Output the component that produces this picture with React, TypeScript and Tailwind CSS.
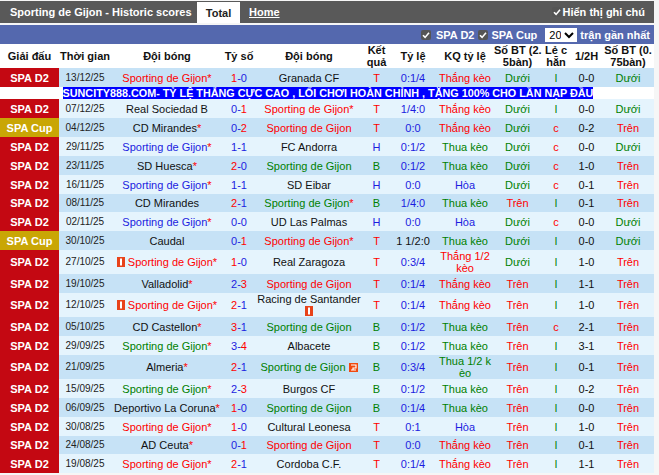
import { Fragment } from "react";

const RED = "text-[#ff0000]";
const GREEN = "text-[#008000]";
const BLUE = "text-[#1c1ce0]";
const BLACK = "text-[#111111]";

type Side = "red" | "green" | "blue" | "black";

type Match = {
  cup?: boolean;
  date: string;
  home: string;
  homeColor: Side;
  homeCard?: boolean;
  score: [number, number];
  away: string;
  awayColor: Side;
  awayCard?: "below" | "swap";
  result: "T" | "H" | "B";
  odds: string;
  oddsBlack?: boolean;
  kq: string;
  bt: "Dưới" | "Trên";
  lec: "l" | "c";
  half: string;
  bt2: "Dưới" | "Trên";
  height?: "tall" | "short";
};

const GIJON = "Sporting de Gijon";
const GIJON_STAR = "Sporting de Gijon*";

const matches: Match[] = [
  { date: "13/12/25", home: GIJON_STAR, homeColor: "red", score: [1, 0], away: "Granada CF", awayColor: "black", result: "T", odds: "0:1/4", kq: "Thắng kèo", bt: "Dưới", lec: "l", half: "0-0", bt2: "Dưới" },
  { date: "07/12/25", home: "Real Sociedad B", homeColor: "black", score: [0, 1], away: GIJON_STAR, awayColor: "red", result: "T", odds: "1/4:0", kq: "Thắng kèo", bt: "Dưới", lec: "l", half: "0-0", bt2: "Dưới" },
  { cup: true, date: "04/12/25", home: "CD Mirandes*", homeColor: "black", score: [0, 2], away: GIJON, awayColor: "red", result: "T", odds: "0:0", kq: "Thắng kèo", bt: "Dưới", lec: "c", half: "0-2", bt2: "Trên" },
  { date: "29/11/25", home: GIJON_STAR, homeColor: "blue", score: [1, 1], away: "FC Andorra", awayColor: "black", result: "H", odds: "0:1/2", kq: "Thua kèo", bt: "Dưới", lec: "c", half: "0-0", bt2: "Dưới" },
  { date: "23/11/25", home: "SD Huesca*", homeColor: "black", score: [2, 0], away: GIJON, awayColor: "green", result: "B", odds: "0:1/2", kq: "Thua kèo", bt: "Dưới", lec: "c", half: "1-0", bt2: "Trên" },
  { date: "16/11/25", home: GIJON_STAR, homeColor: "blue", score: [1, 1], away: "SD Eibar", awayColor: "black", result: "H", odds: "0:0", kq: "Hòa", bt: "Dưới", lec: "c", half: "0-1", bt2: "Trên" },
  { date: "08/11/25", home: "CD Mirandes", homeColor: "black", score: [2, 1], away: GIJON_STAR, awayColor: "green", result: "B", odds: "1/4:0", kq: "Thua kèo", bt: "Trên", lec: "l", half: "0-1", bt2: "Trên", height: "short" },
  { date: "02/11/25", home: GIJON_STAR, homeColor: "blue", score: [0, 0], away: "UD Las Palmas", awayColor: "black", result: "H", odds: "0:0", kq: "Hòa", bt: "Dưới", lec: "c", half: "0-0", bt2: "Dưới" },
  { cup: true, date: "30/10/25", home: "Caudal", homeColor: "black", score: [0, 1], away: GIJON_STAR, awayColor: "red", result: "T", odds: "1 1/2:0", oddsBlack: true, kq: "Thua kèo", bt: "Dưới", lec: "l", half: "0-0", bt2: "Dưới" },
  { date: "27/10/25", home: GIJON_STAR, homeColor: "red", homeCard: true, score: [1, 0], away: "Real Zaragoza", awayColor: "black", result: "T", odds: "0:3/4", kq: "Thắng 1/2 kèo", bt: "Dưới", lec: "l", half: "1-0", bt2: "Trên", height: "tall" },
  { date: "19/10/25", home: "Valladolid*", homeColor: "black", score: [2, 3], away: GIJON, awayColor: "red", result: "T", odds: "0:1/4", kq: "Thắng kèo", bt: "Trên", lec: "l", half: "1-1", bt2: "Trên" },
  { date: "12/10/25", home: GIJON_STAR, homeColor: "red", homeCard: true, score: [2, 1], away: "Racing de Santander", awayColor: "black", awayCard: "below", result: "T", odds: "0:1/4", kq: "Thắng kèo", bt: "Trên", lec: "l", half: "1-0", bt2: "Trên", height: "tall" },
  { date: "05/10/25", home: "CD Castellon*", homeColor: "black", score: [3, 1], away: GIJON, awayColor: "green", result: "B", odds: "0:1/2", kq: "Thua kèo", bt: "Trên", lec: "c", half: "2-1", bt2: "Trên" },
  { date: "29/09/25", home: GIJON_STAR, homeColor: "green", score: [3, 4], away: "Albacete", awayColor: "black", result: "B", odds: "0:1/2", kq: "Thua kèo", bt: "Trên", lec: "l", half: "3-1", bt2: "Trên" },
  { date: "21/09/25", home: "Almeria*", homeColor: "black", score: [2, 1], away: GIJON, awayColor: "green", awayCard: "swap", result: "B", odds: "0:3/4", kq: "Thua 1/2 kèo", bt: "Trên", lec: "l", half: "0-1", bt2: "Trên", height: "tall" },
  { date: "15/09/25", home: GIJON_STAR, homeColor: "green", score: [2, 3], away: "Burgos CF", awayColor: "black", result: "B", odds: "0:1/2", kq: "Thua kèo", bt: "Trên", lec: "l", half: "0-2", bt2: "Trên" },
  { date: "06/09/25", home: "Deportivo La Coruna*", homeColor: "black", score: [1, 0], away: GIJON, awayColor: "green", result: "B", odds: "0:1/4", kq: "Thua kèo", bt: "Trên", lec: "l", half: "0-0", bt2: "Trên" },
  { date: "30/08/25", home: GIJON_STAR, homeColor: "red", score: [1, 0], away: "Cultural Leonesa", awayColor: "black", result: "T", odds: "0:1", kq: "Hòa", bt: "Trên", lec: "l", half: "1-0", bt2: "Trên" },
  { date: "24/08/25", home: "AD Ceuta*", homeColor: "black", score: [0, 1], away: GIJON, awayColor: "red", result: "T", odds: "0:0", kq: "Thắng kèo", bt: "Trên", lec: "l", half: "0-1", bt2: "Trên", height: "short" },
  { date: "19/08/25", home: GIJON_STAR, homeColor: "red", score: [2, 1], away: "Cordoba C.F.", awayColor: "black", result: "T", odds: "0:1/4", kq: "Thắng kèo", bt: "Trên", lec: "l", half: "1-1", bt2: "Trên" },
];

const sideClass: Record<Side, string> = {
  red: RED,
  green: GREEN,
  blue: BLUE,
  black: BLACK,
};

const resultClass = { T: RED, H: BLUE, B: GREEN };

const heightClass = { tall: "h-[24px]", short: "h-[18px]" };

const kqClass = (kq: string) => {
  if (kq.startsWith("Thắng")) return RED;
  if (kq.startsWith("Thua")) return GREEN;
  return BLUE;
};

const RedCard = ({ className = "" }: { className?: string }) => (
  <svg viewBox="0 0 8 10" className={`inline-block h-[10px] w-[8px] align-[-1px] ${className}`}>
    <rect width="8" height="10" fill="#e8431a" />
    <rect x="3" y="1.5" width="2" height="7" fill="#ffffff" />
  </svg>
);

const SwapCard = () => (
  <svg viewBox="0 0 9 9" className="ml-[3px] inline-block h-[9px] w-[9px] align-[-1px]">
    <rect width="9" height="9" fill="#f04a10" />
    <path d="M2 2h5v3H4v2" fill="none" stroke="#ffffff" strokeWidth="1.2" />
    <path d="M2 7h5" stroke="#ffffff" strokeWidth="1" />
  </svg>
);

const Checkbox = () => (
  <span className="flex h-[10px] w-[10px] shrink-0 items-center justify-center rounded-[2px] bg-[#555555]">
    <svg viewBox="0 0 10 10" className="h-[10px] w-[10px]">
      <path d="M2 5.2 4.1 7.4 8 2.8" fill="none" stroke="#ffffff" strokeWidth="1.6" />
    </svg>
  </span>
);

const Score = ({ score }: { score: [number, number] }) => {
  const [a, b] = score;
  return (
    <>
      <span className={a > b ? RED : BLUE}>{a}</span>
      <span className={BLUE}>-</span>
      <span className={b > a ? RED : BLUE}>{b}</span>
    </>
  );
};

// the star is always red, whatever colour the team name has
const Team = ({ name }: { name: string }) =>
  name.endsWith("*") ? (
    <>
      {name.slice(0, -1)}
      <span className={RED}>*</span>
    </>
  ) : (
    <>{name}</>
  );

const headers = [
  "Giải đấu",
  "Thời gian",
  "Đội bóng",
  "Tỷ số",
  "Đội bóng",
  "Kết\nquả",
  "Tỷ lệ",
  "KQ tỷ lệ",
  "Số BT (2.\n5bàn)",
  "Lẻ c\nhẵn",
  "1/2H",
  "Số BT (0.\n75bàn)",
];

const Row = ({ m, index }: { m: Match; index: number }) => (
  <tr className={`${index % 2 === 0 ? "bg-[#c6e2f6]" : "bg-[#e5f4fd]"} ${m.height ? heightClass[m.height] : "h-[19px]"}`}>
    <td className={`font-bold text-white ${m.cup ? "bg-[#c9a605]" : "bg-[#c40812]"}`}>
      {m.cup ? "SPA Cup" : "SPA D2"}
    </td>
    <td className="text-[10px] text-[#222222]">{m.date}</td>
    <td className={sideClass[m.homeColor]}>
      {m.homeCard && <RedCard className="mr-[3px]" />}
      <Team name={m.home} />
    </td>
    <td>
      <Score score={m.score} />
    </td>
    <td className={sideClass[m.awayColor]}>
      <Team name={m.away} />
      {m.awayCard === "below" && (
        <span className="block h-[12px]">
          <RedCard />
        </span>
      )}
      {m.awayCard === "swap" && <SwapCard />}
    </td>
    <td className={resultClass[m.result]}>{m.result}</td>
    <td className={m.oddsBlack ? BLACK : BLUE}>{m.odds}</td>
    <td className={`break-all ${kqClass(m.kq)}`}>{m.kq}</td>
    <td className={m.bt === "Trên" ? RED : GREEN}>{m.bt}</td>
    <td className={m.lec === "c" ? RED : GREEN}>{m.lec}</td>
    <td className={BLACK}>{m.half}</td>
    <td className={m.bt2 === "Trên" ? RED : GREEN}>{m.bt2}</td>
  </tr>
);

const App = () => {
  return (
    <div className="h-[475px] w-[659px] overflow-hidden bg-[#f6f6f6] pt-px font-['Liberation_Sans',Arial,sans-serif] text-[11px] leading-[12px]">
      <div className="w-[654px]">
        <div className="flex h-[22px] items-end bg-[#595959] font-bold text-white">
          <span className="ml-[10px] w-[187px] self-center whitespace-nowrap">Sporting de Gijon - Historic scores</span>
          <span className="flex h-[21px] w-[43px] items-center justify-center bg-white text-[#222222]">Total</span>
          <span className="ml-[9px] self-center underline">Home</span>
          <label className="ml-auto mr-[9px] flex items-center gap-[1px] self-center">
            <Checkbox />
            <span>Hiển thị ghi chú</span>
          </label>
        </div>

        <div className="mt-[2px] flex h-[19px] items-center justify-end bg-[#5468ae] pr-[4px] font-bold text-white">
          <Checkbox />
          <span className="ml-[5px]">SPA D2</span>
          <span className="ml-[4px]">
            <Checkbox />
          </span>
          <span className="ml-[3px]">SPA Cup</span>
          <select
            defaultValue="20"
            className="ml-[8px] h-[14px] w-[32px] bg-white text-[11px] font-normal text-black"
          >
            <option value="20">20</option>
          </select>
          <span className="ml-[3px]">trận gần nhất</span>
        </div>

        <table className="w-[654px] table-fixed text-center">
          <colgroup>
            <col className="w-[59px]" />
            <col className="w-[52px]" />
            <col className="w-[112px]" />
            <col className="w-[32px]" />
            <col className="w-[108px]" />
            <col className="w-[27px]" />
            <col className="w-[46px]" />
            <col className="w-[58px]" />
            <col className="w-[47px]" />
            <col className="w-[30px]" />
            <col className="w-[31px]" />
            <col className="w-[52px]" />
          </colgroup>
          <thead>
            <tr className="h-[24px] bg-white font-bold text-[#111111]">
              {headers.map((h, i) => (
                <th key={i} className="whitespace-pre p-0 font-bold">
                  {h}
                </th>
              ))}
            </tr>
          </thead>
          <tbody>
            {matches.map((m, i) =>
              i === 0 ? (
                <Fragment key={m.date}>
                  <Row m={m} index={i} />
                  <tr className="h-[12px] bg-white">
                    <td colSpan={12} className="whitespace-nowrap pl-[2px] text-[10.8px] font-bold">
                      <span className="bg-[#0000ff] text-white">
                        SUNCITY888.COM- TỶ LỆ THẮNG CỰC CAO , LỐI CHƠI HOÀN CHỈNH , TẶNG 100% CHO LẦN NẠP ĐẦU
                      </span>
                    </td>
                  </tr>
                </Fragment>
              ) : (
                <Row key={m.date} m={m} index={i} />
              ),
            )}
          </tbody>
        </table>
      </div>
    </div>
  );
};

export default App;
